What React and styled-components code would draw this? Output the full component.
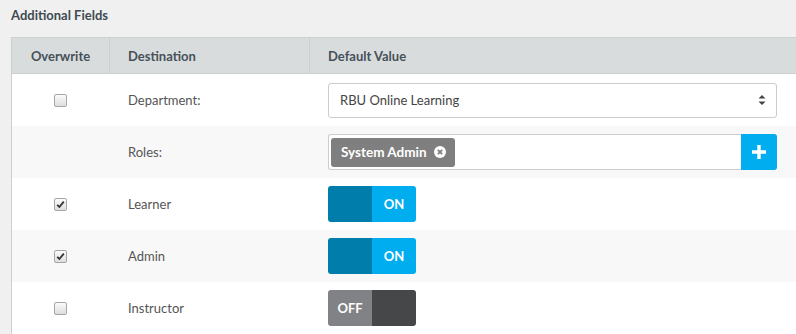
import styled, { createGlobalStyle } from "styled-components";

const GlobalStyle = createGlobalStyle`
  html, body {
    margin: 0;
    padding: 0;
    background: #f0f0f0;
    overflow: hidden;
  }
  body {
    font-family: Lato, "Open Sans", sans-serif;
    font-size: 13px;
    color: #555;
  }
`;

const Page = styled.div`
  padding: 8px 0 0 11px;
  width: 796px;
  box-sizing: border-box;
`;

const Title = styled.h3`
  margin: 0 0 14px;
  font-size: 13px;
  font-weight: 700;
  color: #3f4a52;
  line-height: 15px;
`;

const Table = styled.div`
  border-left: 1px solid #cdd0d1;
`;

const Row = styled.div`
  display: grid;
  grid-template-columns: 97px 200px 1fr;
  height: 52px;
  align-items: center;
  background: ${(p) => (p.$alt ? "#f8f8f8" : "#fff")};
`;

const HeadRow = styled(Row)`
  height: 35px;
  background: #d9dcdd;
  border-top: 1px solid #cdd0d1;
  border-bottom: 1px solid #cdd0d1;
  align-items: stretch;
`;

const HeadCell = styled.div`
  display: flex;
  align-items: center;
  justify-content: ${(p) => (p.$center ? "center" : "flex-start")};
  padding-left: ${(p) => (p.$center ? "0" : "18px")};
  border-left: ${(p) => (p.$first ? "none" : "1px solid #cdd0d1")};
  font-weight: 700;
  color: #46515a;
`;

const CheckCell = styled.div`
  display: flex;
  justify-content: center;
`;

const Label = styled.div`
  padding-left: 19px;
  color: #555;
`;

const ValueCell = styled.div`
  padding: 0 19px 0 19px;
`;

const Box = styled.span`
  width: 11px;
  height: 11px;
  border: 1px solid #a6a6a6;
  border-radius: 2px;
  background: linear-gradient(#fbfbfb, #dedede);
  display: flex;
  align-items: center;
  justify-content: center;
`;

const Select = styled.div`
  height: 35px;
  border: 1px solid #ccc;
  border-radius: 3px;
  background: #fff;
  display: flex;
  align-items: center;
  justify-content: space-between;
  padding: 0 10px 0 11px;
  box-sizing: border-box;
  color: #444;
`;

const TagInput = styled.div`
  height: 36px;
  border: 1px solid #ccc;
  border-right: none;
  border-radius: 3px;
  background: #fff;
  display: flex;
  align-items: center;
  box-sizing: border-box;
  padding-left: 2px;
`;

const Tag = styled.span`
  height: 29px;
  background: #7f7f7f;
  border-radius: 3px;
  color: #fff;
  font-weight: 700;
  font-size: 13.5px;
  display: flex;
  align-items: center;
  gap: 7px;
  padding: 0 9px 0 10px;
`;

const AddButton = styled.button`
  margin-left: auto;
  width: 36px;
  height: 36px;
  border: none;
  border-radius: 0 3px 3px 0;
  background: #00aeef;
  display: flex;
  align-items: center;
  justify-content: center;
  padding: 0;
`;

const Toggle = styled.div`
  width: 88px;
  height: 36px;
  border-radius: 3px;
  overflow: hidden;
  display: flex;
`;

const Half = styled.span`
  flex: 1;
  display: flex;
  align-items: center;
  justify-content: center;
  background: ${(p) => p.$bg};
  color: #fff;
  font-weight: 700;
  font-size: 13px;
`;

const Check = ({ on }) => (
  <Box>
    {on && (
      <svg width="9" height="9" viewBox="0 0 9 9">
        <path d="M1.2 4.8 L3.4 7 L7.8 1.6" fill="none" stroke="#333" strokeWidth="1.8" />
      </svg>
    )}
  </Box>
);

const Switch = ({ on }) =>
  on ? (
    <Toggle>
      <Half $bg="#007dab" />
      <Half $bg="#00aeef">ON</Half>
    </Toggle>
  ) : (
    <Toggle>
      <Half $bg="#808285">OFF</Half>
      <Half $bg="#454749" />
    </Toggle>
  );

const roleRows = [
  { name: "Learner", on: true, alt: false },
  { name: "Admin", on: true, alt: true },
  { name: "Instructor", on: false, alt: false },
];

export default function App() {
  return (
    <Page>
      <GlobalStyle />
      <Title>Additional Fields</Title>
      <Table>
        <HeadRow>
          <HeadCell $first $center>Overwrite</HeadCell>
          <HeadCell>Destination</HeadCell>
          <HeadCell>Default Value</HeadCell>
        </HeadRow>

        <Row>
          <CheckCell>
            <Check />
          </CheckCell>
          <Label>Department:</Label>
          <ValueCell>
            <Select>
              <span>RBU Online Learning</span>
              <svg width="8" height="12" viewBox="0 0 8 12">
                <path d="M4 1 L7.5 4.5 H0.5 Z M4 11 L0.5 7.5 H7.5 Z" fill="#444" />
              </svg>
            </Select>
          </ValueCell>
        </Row>

        <Row $alt>
          <CheckCell />
          <Label>Roles:</Label>
          <ValueCell>
            <TagInput>
              <Tag>
                System Admin
                <svg width="12" height="12" viewBox="0 0 12 12">
                  <circle cx="6" cy="6" r="6" fill="#fff" />
                  <path d="M3.8 3.8 L8.2 8.2 M8.2 3.8 L3.8 8.2" stroke="#7f7f7f" strokeWidth="1.8" />
                </svg>
              </Tag>
              <AddButton>
                <svg width="16" height="16" viewBox="0 0 16 16">
                  <path d="M8 1 V15 M1 8 H15" stroke="#fff" strokeWidth="3.4" />
                </svg>
              </AddButton>
            </TagInput>
          </ValueCell>
        </Row>

        {roleRows.map((r) => (
          <Row key={r.name} $alt={r.alt}>
            <CheckCell>
              <Check on={r.on} />
            </CheckCell>
            <Label>{r.name}</Label>
            <ValueCell>
              <Switch on={r.on} />
            </ValueCell>
          </Row>
        ))}
      </Table>
    </Page>
  );
}
